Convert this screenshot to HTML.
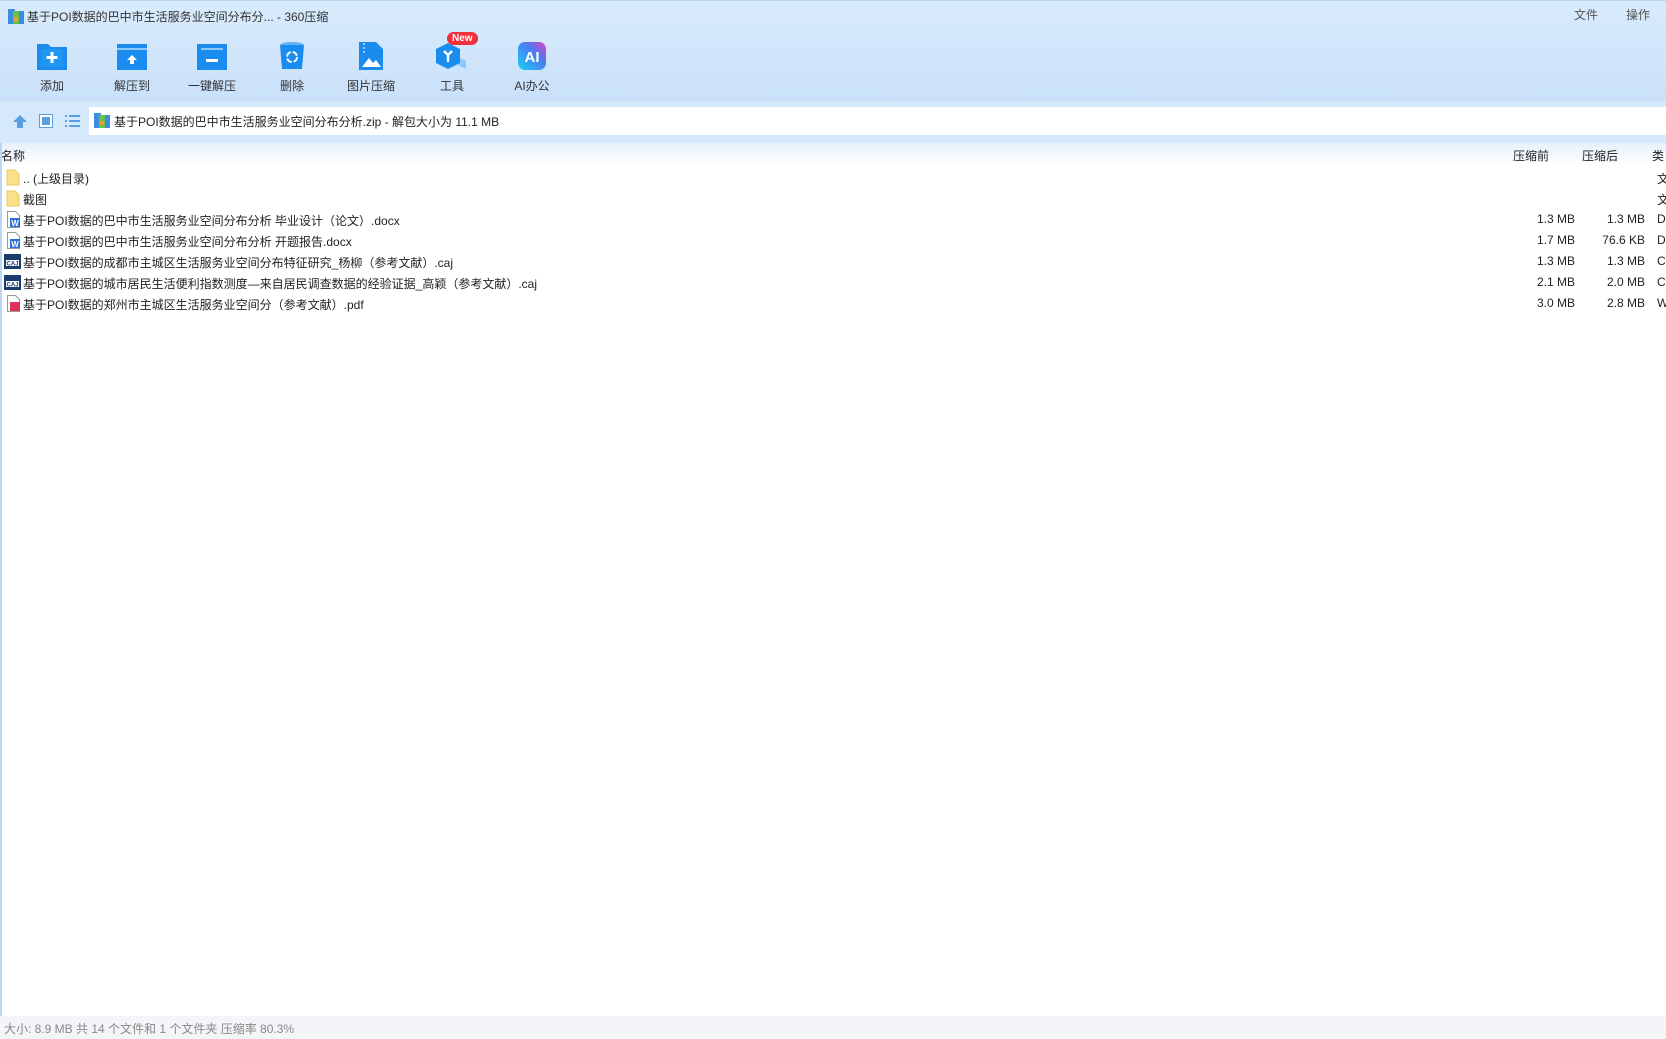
<!DOCTYPE html>
<html><head><meta charset="utf-8">
<style>
*{margin:0;padding:0;box-sizing:border-box}
body{width:1666px;height:1039px;overflow:hidden;font-family:"Liberation Sans","Noto Sans CJK SC",sans-serif;font-size:12px;color:#222;background:#fff;position:relative}
.top{position:absolute;left:0;top:0;width:1666px;height:107px;background:linear-gradient(#d9ebfd,#c8e0fa);border-top:1px solid #b8d4f2}
.title{position:absolute;left:27px;top:7px;font-size:12px;color:#333}
.menu{position:absolute;top:5px;font-size:12px;color:#555}
.tb{position:absolute;top:40px;width:80px;margin-left:-40px;text-align:center}
.tb svg{display:block;margin:0 auto}
.tb span{display:block;margin-top:6px;font-size:12px;color:#333}
.addr{position:absolute;left:0;top:101px;width:1666px;height:42px;background:#d6e8fb}
.abox{position:absolute;left:89px;top:107px;right:0;height:28px;background:#fff}
.abox span{position:absolute;left:25px;top:6px}
.hdr{position:absolute;left:0;top:143px;width:1666px;height:22px;background:linear-gradient(#e6f0fc,#fff)}
.hdr div{position:absolute;top:4px;white-space:nowrap}
.row{position:absolute;left:0;height:21px;width:1666px}
.row .n{position:absolute;left:23px;top:3px;white-space:nowrap}
.row .ic{position:absolute;left:6px;top:2px}
.row .a{position:absolute;right:91px;top:3px}
.row .b{position:absolute;right:21px;top:3px}
.row .t{position:absolute;left:1657px;top:3px}
.status{position:absolute;left:0;top:1016px;width:1666px;height:23px;background:#f3f5f8;color:#888;font-size:12px;padding:4px 0 0 4px}
.lb{position:absolute;left:0;top:143px;width:2px;height:873px;background:#bcd6f5}
</style></head><body>
<div class="top">
 <svg style="position:absolute;left:8px;top:8px" width="16" height="15"><rect x="0" y="2" width="16" height="13" fill="#3b8de0"/><rect x="0" y="0" width="7" height="4" fill="#3b8de0"/><rect x="5" y="2" width="6" height="13" fill="#6cc04a"/><rect x="6" y="8" width="4" height="4" fill="#f0a020"/></svg>
 <div class="title">基于POI数据的巴中市生活服务业空间分布分... - 360压缩</div>
 <div class="menu" style="left:1574px">文件</div>
 <div class="menu" style="left:1626px">操作</div>
 <div class="tb" style="left:52px"><svg width="32" height="30"><path d="M1 3h11l3 3h16v23H1z" fill="#1a8cf0"/><rect x="5" y="8" width="22" height="18" fill="#2196f3"/><path d="M16 11v11M10.5 16.5h11" stroke="#fff" stroke-width="3"/></svg><span>添加</span></div>
 <div class="tb" style="left:132px"><svg width="32" height="30"><rect x="1" y="3" width="30" height="26" fill="#1a8cf0"/><rect x="1" y="7" width="30" height="2" fill="#8cc8fb"/><path d="M16 14l-5 5h3v4h4v-4h3z" fill="#fff"/></svg><span>解压到</span></div>
 <div class="tb" style="left:212px"><svg width="32" height="30"><rect x="1" y="3" width="30" height="26" fill="#1a8cf0"/><rect x="5" y="7" width="22" height="2" fill="#8cc8fb"/><rect x="10" y="18" width="12" height="3" fill="#fff"/></svg><span>一键解压</span></div>
 <div class="tb" style="left:292px"><svg width="26" height="30"><ellipse cx="13" cy="4" rx="12" ry="3" fill="#5fb2f7"/><path d="M1 4h24l-2 24H3z" fill="#1a8cf0"/><circle cx="13" cy="16" r="5" fill="none" stroke="#fff" stroke-width="2" stroke-dasharray="6 2"/></svg><span>删除</span></div>
 <div class="tb" style="left:371px"><svg width="26" height="30"><path d="M1 1h17l7 7v21H1z" fill="#1a8cf0"/><path d="M6 2v10" stroke="#8cc8fb" stroke-width="2" stroke-dasharray="2 2"/><path d="M4 26l7-9 4 5 3-3 5 7z" fill="#fff"/></svg><span>图片压缩</span></div>
 <div class="tb" style="left:452px"><svg width="36" height="30"><path d="M24 16l8 4v8l-8-4z" fill="#8cc8fb"/><path d="M14 2l12 6v14l-12 6-12-6V8z" fill="#1a8cf0"/><path d="M10 10l4 4 4-4M14 14v7" stroke="#fff" stroke-width="2.4" fill="none"/></svg><span>工具</span>
  <div style="position:absolute;left:35px;top:-9px;background:#f0303a;color:#fff;font-size:10px;font-weight:bold;border-radius:8px;padding:1px 5px">New</div></div>
 <div class="tb" style="left:532px"><svg width="28" height="30"><defs><linearGradient id="g" x1="0" y1="1" x2="1" y2="0"><stop offset="0" stop-color="#1ad0f0"/><stop offset=".6" stop-color="#4a7cf5"/><stop offset="1" stop-color="#e040c0"/></linearGradient></defs><rect y="1" width="28" height="28" rx="7" fill="url(#g)"/><text x="14" y="21" text-anchor="middle" fill="#fff" font-size="15" font-weight="bold" font-family="Liberation Sans">AI</text></svg><span>AI办公</span></div>
</div>
<div class="addr">
 <svg style="position:absolute;left:12px;top:12px" width="16" height="16"><path d="M8 2l7 7h-4v6H5V9H1z" fill="#5a9fe0"/></svg>
 <svg style="position:absolute;left:39px;top:13px" width="14" height="14"><rect x="0.5" y="0.5" width="13" height="13" fill="#fff" stroke="#5a9fe0"/><rect x="3" y="3" width="8" height="8" fill="#5a9fe0"/></svg>
 <svg style="position:absolute;left:65px;top:14px" width="15" height="12"><g fill="#5a9fe0"><rect x="0" y="0" width="2" height="2"/><rect x="4" y="0" width="11" height="2"/><rect x="0" y="5" width="2" height="2"/><rect x="4" y="5" width="11" height="2"/><rect x="0" y="10" width="2" height="2"/><rect x="4" y="10" width="11" height="2"/></g></svg>
</div>
<div class="abox"><svg style="position:absolute;left:5px;top:6px" width="16" height="15"><rect x="0" y="2" width="16" height="13" fill="#3b8de0"/><rect x="0" y="0" width="7" height="4" fill="#3b8de0"/><rect x="5" y="2" width="6" height="13" fill="#6cc04a"/><rect x="6" y="8" width="4" height="4" fill="#f0a020"/></svg><span>基于POI数据的巴中市生活服务业空间分布分析.zip - 解包大小为 11.1 MB</span></div>
<div class="hdr"><div style="left:1px">名称</div><div style="left:1513px">压缩前</div><div style="left:1582px">压缩后</div><div style="left:1652px">类</div></div>
<div class="lb"></div>

<div class="row" style="top:167px"><svg class="ic" width="14" height="17"><path d="M1 1h8l4 4v11H1z" fill="#fbe08a" stroke="#e8c860"/></svg><span class="n">.. (上级目录)</span><span class="t">文</span></div>
<div class="row" style="top:188px"><svg class="ic" width="14" height="17"><path d="M1 1h8l4 4v11H1z" fill="#fbe08a" stroke="#e8c860"/></svg><span class="n">截图</span><span class="t">文</span></div>
<div class="row" style="top:209px"><svg class="ic" width="15" height="17"><path d="M1.5 .5h8l4 4v12h-12z" fill="#fff" stroke="#999"/><rect x="4" y="7" width="10" height="9" fill="#2b6fd8"/><text x="9" y="15" text-anchor="middle" font-size="8" fill="#fff" font-weight="bold">W</text></svg><span class="n">基于POI数据的巴中市生活服务业空间分布分析 毕业设计（论文）.docx</span><span class="a">1.3 MB</span><span class="b">1.3 MB</span><span class="t">D</span></div>
<div class="row" style="top:230px"><svg class="ic" width="15" height="17"><path d="M1.5 .5h8l4 4v12h-12z" fill="#fff" stroke="#999"/><rect x="4" y="7" width="10" height="9" fill="#2b6fd8"/><text x="9" y="15" text-anchor="middle" font-size="8" fill="#fff" font-weight="bold">W</text></svg><span class="n">基于POI数据的巴中市生活服务业空间分布分析 开题报告.docx</span><span class="a">1.7 MB</span><span class="b">76.6 KB</span><span class="t">D</span></div>
<div class="row" style="top:251px"><svg class="ic" style="left:4px" width="17" height="17"><rect x="0" y="1" width="17" height="15" fill="#1d3c6e"/><rect x="2" y="7" width="13" height="6" fill="#fff"/><text x="8.5" y="12.5" text-anchor="middle" font-size="6" fill="#1d3c6e" font-weight="bold">CAJ</text></svg><span class="n">基于POI数据的成都市主城区生活服务业空间分布特征研究_杨柳（参考文献）.caj</span><span class="a">1.3 MB</span><span class="b">1.3 MB</span><span class="t">C</span></div>
<div class="row" style="top:272px"><svg class="ic" style="left:4px" width="17" height="17"><rect x="0" y="1" width="17" height="15" fill="#1d3c6e"/><rect x="2" y="7" width="13" height="6" fill="#fff"/><text x="8.5" y="12.5" text-anchor="middle" font-size="6" fill="#1d3c6e" font-weight="bold">CAJ</text></svg><span class="n">基于POI数据的城市居民生活便利指数测度—来自居民调查数据的经验证据_高颖（参考文献）.caj</span><span class="a">2.1 MB</span><span class="b">2.0 MB</span><span class="t">C</span></div>
<div class="row" style="top:293px"><svg class="ic" width="15" height="17"><path d="M1.5 .5h8l4 4v12h-12z" fill="#fff" stroke="#999"/><rect x="4" y="7" width="10" height="9" fill="#e0305a"/></svg><span class="n">基于POI数据的郑州市主城区生活服务业空间分（参考文献）.pdf</span><span class="a">3.0 MB</span><span class="b">2.8 MB</span><span class="t">W</span></div>

<div class="status">大小: 8.9 MB 共 14 个文件和 1 个文件夹 压缩率 80.3%</div>
</body></html>
